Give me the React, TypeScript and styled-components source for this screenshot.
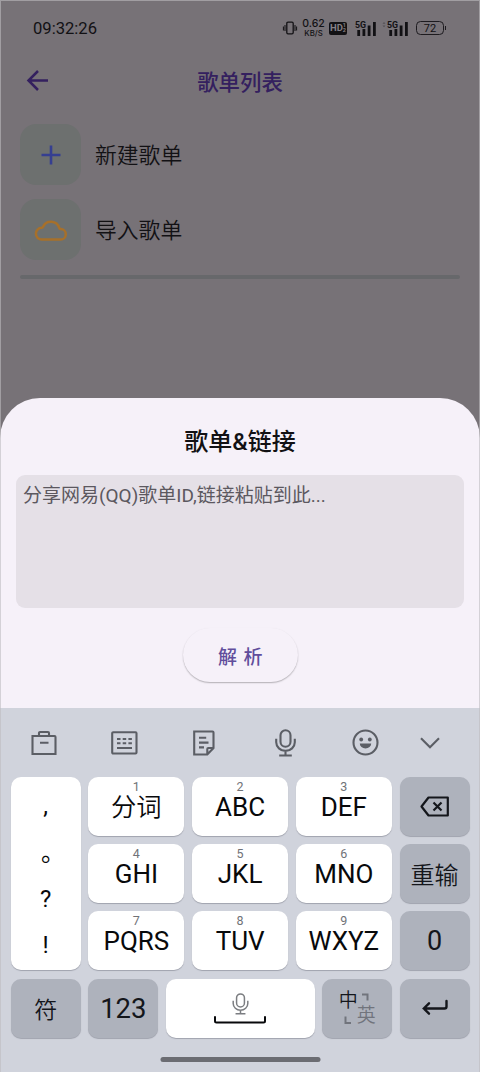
import React from "react";
import styled, { createGlobalStyle } from "styled-components";

const GlobalStyle = createGlobalStyle`
  *, *::before, *::after { box-sizing: border-box; }
  body { margin: 0; }
  button { border: 0; padding: 0; background: none; font: inherit; color: inherit; }
  svg { display: block; flex: none; overflow: visible; }
`;

const Screen = styled.div`
  position: relative;
  width: 480px;
  height: 1072px;
  display: flex;
  flex-direction: column;
  overflow: hidden;
  background: #777277;
  font-family: Roboto, "Noto Sans CJK SC", sans-serif;
  color: #121114;
  &::after {
    content: "";
    position: absolute;
    inset: 0;
    border: 1px solid rgba(190, 188, 192, 0.6);
    border-bottom-width: 0;
    pointer-events: none;
  }
`;

const StatusBar = styled.header`
  height: 54px;
  padding: 2px 34px 0 33px;
  display: flex;
  align-items: center;
  justify-content: space-between;
`;

const Clock = styled.time`
  font-size: 16.6px;
  line-height: 20px;
  padding-top: 1px;
`;

const StatusIcons = styled.div`
  display: flex;
  align-items: center;
`;

const NetSpeed = styled.div`
  width: 23px;
  margin-left: 5px;
  display: flex;
  flex-direction: column;
  align-items: center;
  font-family: Inter, sans-serif;
  font-weight: 500;
  font-size: 10.5px;
  line-height: 10px;
`;

const NetUnit = styled.span`
  font-size: 7.8px;
  line-height: 8px;
`;

const HdBadge = styled.div`
  width: 18px;
  height: 13px;
  margin: 0 9px 0 4px;
  border-radius: 2px;
  background: #121114;
  color: #858086;
  display: flex;
  align-items: center;
  justify-content: center;
  font-size: 9.5px;
  font-weight: 700;
  line-height: 12px;
`;

const HdDigits = styled.span`
  display: flex;
  flex-direction: column;
  font-size: 5.5px;
  line-height: 5px;
`;

const Signal = styled.div<{ $gap: number }>`
  width: 21px;
  height: 15px;
  margin-right: ${(p) => p.$gap}px;
`;

const Battery = styled.div`
  position: relative;
  width: 28px;
  height: 14px;
  margin-right: 2px;
  border: 1px solid #1d1b1f;
  border-radius: 4.5px;
  font-size: 11px;
  line-height: 13px;
  text-align: center;
  &::after {
    content: "";
    position: absolute;
    right: -3px;
    top: 4px;
    width: 1.5px;
    height: 4px;
    background: #1d1b1f;
  }
`;

const TitleBar = styled.div`
  height: 54px;
  padding: 0 25px;
  display: grid;
  grid-template-columns: 24px 1fr 24px;
  align-items: center;
  color: #34205f;
`;

const PageTitle = styled.h1`
  margin: 0;
  padding-top: 3px;
  font-size: 21.4px;
  line-height: 30px;
  font-weight: 500;
  text-align: center;
`;

const Actions = styled.div`
  height: 290px;
  padding: 16px 20px 0;
  display: flex;
  flex-direction: column;
`;

const ActionRow = styled.div`
  height: 61px;
  margin-bottom: 14px;
  display: flex;
  align-items: center;
  gap: 14px;
`;

const ActionLabel = styled.span`
  padding-top: 3px;
  font-size: 21.8px;
  line-height: 32px;
  font-weight: 350;
`;

const IconTile = styled.div`
  width: 61px;
  height: 61px;
  border-radius: 16px;
  background: #6d706f;
  display: flex;
  align-items: center;
  justify-content: center;
`;

const Divider = styled.div`
  height: 4px;
  margin-top: 0.5px;
  border-radius: 2px;
  background: #67686b;
`;

const Sheet = styled.section`
  height: 310px;
  padding: 27px 16px 0;
  border-radius: 40px 40px 0 0;
  background: #f6f1f9;
  display: flex;
  flex-direction: column;
  align-items: center;
`;

const SheetTitle = styled.h2`
  margin: 0 0 15.5px;
  font-size: 24px;
  line-height: 34px;
  font-weight: 500;
`;

const LinkInput = styled.div`
  align-self: stretch;
  height: 133px;
  padding: 7.5px 7px;
  border-radius: 9px;
  background: #e5e0e7;
  color: #5c585f;
  font-size: 19px;
  line-height: 28px;
`;

const ParseButton = styled.button`
  width: 115px;
  height: 54px;
  margin-top: 20.5px;
  padding-left: 7px;
  border-radius: 27px;
  background: #f6f1f9;
  box-shadow: 0 1px 1.5px rgba(0, 0, 0, 0.28);
  color: #614e9c;
  font-size: 19px;
  font-weight: 500;
  letter-spacing: 6.5px;
`;

const Keyboard = styled.section`
  height: 364px;
  padding: 0 10px 0 11px;
  background: #d0d3dc;
  display: flex;
  flex-direction: column;
`;

const Toolbar = styled.div`
  height: 69px;
  margin-left: 20px;
  display: grid;
  grid-template-columns: 79.5px 82.5px 81.5px 77px 68.5px 29px;
  align-items: center;
  color: #5b5e65;
`;

const KeyGrid = styled.div`
  display: grid;
  grid-template-columns: 70px 96px 96px 96px 70px;
  grid-template-rows: repeat(3, 59px);
  column-gap: 7.75px;
  row-gap: 8.2px;
  margin-left: -0.4px;
`;

const BottomRow = styled.div`
  margin-top: 8.2px;
  height: 59px;
  margin-left: -0.2px;
  display: grid;
  grid-template-columns: 70px 70px 149px 70px 70px;
  column-gap: 7.5px;
`;

const Key = styled.button<{ $dark?: boolean; $size?: number; $light?: boolean }>`
  border-radius: 10px;
  background: ${(p) => (p.$dark ? "#aeb2bc" : "#ffffff")};
  box-shadow: 0 1px 0.8px rgba(80, 84, 96, 0.36);
  color: ${(p) => (p.$dark ? "#14161b" : "#08090b")};
  font-size: ${(p) => p.$size ?? 26}px;
  font-weight: ${(p) => (p.$light ? 350 : 400)};
  display: flex;
  flex-direction: column;
  align-items: center;
  justify-content: center;
`;

const KeyHint = styled.span`
  height: 16px;
  color: #707277;
  font-size: 12.5px;
  line-height: 16px;
`;

const KeyLabel = styled.span<{ $cjk?: boolean }>`
  height: 39px;
  font-size: ${(p) => (p.$cjk ? 25.3 : 26)}px;
  font-weight: ${(p) => (p.$cjk ? 350 : 400)};
  line-height: ${(p) => (p.$cjk ? 26 : 24)}px;
`;

const SideKey = styled(Key)`
  grid-row: 1 / span 3;
  justify-content: flex-start;
  padding-top: 5.5px;
  font-size: 24px;
`;

const Mark = styled.span`
  height: 46.5px;
  display: flex;
  align-items: center;
  justify-content: center;
`;

const FullStop = styled(Mark)`
  padding: 0 0 4px 15px;
`;

const LanguageKey = styled(Key)`
  display: grid;
  grid-template-columns: 18px 18px;
  grid-template-rows: 15.5px 15.5px;
  align-content: center;
  justify-content: center;
  place-items: center;
  padding-top: 1px;
  font-size: 19px;
  font-weight: 350;
  line-height: 18px;
`;

const Muted = styled.span`
  color: #71747c;
`;

const Corner = styled.span<{ $end?: boolean }>`
  align-self: ${(p) => (p.$end ? "end" : "start")};
`;

const HomeBar = styled.div`
  width: 160px;
  height: 5px;
  margin: 19px auto 0;
  transform: translateX(-0.5px);
  border-radius: 3px;
  background: #6b6c72;
`;

const VibrateIcon = () => (
  <svg width="14" height="14" viewBox="0 0 14 14" fill="none" stroke="currentColor" strokeWidth="1.3">
    <rect x="3.8" y="1.2" width="6.4" height="11.6" rx="1.2" />
    <path d="M2 4v6M.4 5.5v4M12 4v6M13.6 5.5v4" strokeWidth="1" />
  </svg>
);

const SignalBars = ({ gap, active }: { gap: number; active?: boolean }) => (
  <Signal $gap={gap}>
    <svg width="21" height="15" viewBox="0 0 21 15" fill="currentColor">
      {active && <path d="M-5.5 2.8l1.500-1.800 1.500 1.800zM-5.500 4.500h3l-1.500 1.800z" opacity="0.35" />}
      <text x="-1" y="6.5" fontSize="8.8" fontWeight="700">5G</text>
      <path d="M1.3 9h2.8v6H1.3zM6.5 8h2.8v7H6.5zM11.7 4.5h2.8V15h-2.8zM17 1h2.8v14H17z" />
    </svg>
  </Signal>
);

const BackIcon = () => (
  <svg width="24" height="24" viewBox="0 0 24 24" fill="none" stroke="currentColor" strokeWidth="2.5">
    <path d="M23 11.500H3.500M13 2 3.500 11.500l9.500 9.500" />
  </svg>
);

const PlusIcon = () => (
  <svg width="20" height="20" viewBox="0 0 20 20" fill="none" stroke="#363f91" strokeWidth="2.6">
    <path d="M10 .5v19M.5 10h19" />
  </svg>
);

const CloudIcon = () => (
  <svg width="32" height="22" viewBox="0 0 32 22" fill="none" stroke="#a7702a" strokeWidth="2.5" strokeLinejoin="round">
    <path d="M6.8 20.500h18.700a5.200 5.200 0 0 0 .2-10.400c-.8 0-1.100-.1-1.400-1A8.700 8.700 0 0 0 8 7.900c-.2.700-.5.900-1.300.9a5.850 5.850 0 0 0 .1 11.700Z" />
  </svg>
);

const BriefcaseIcon = () => (
  <svg width="26" height="26" viewBox="0 0 26 26" fill="none" stroke="currentColor" strokeWidth="2.1">
    <path d="M1.500 6h22a1 1 0 0 1 1 1v17h-23zM8 6V3a1 1 0 0 1 1-1h8a1 1 0 0 1 1 1v3M9 12.700h8.500" />
  </svg>
);

const KeyboardIcon = () => (
  <svg width="27" height="24" viewBox="0 0 27 24" fill="none" stroke="currentColor" strokeWidth="2.1">
    <rect x="1.2" y="1.2" width="24.3" height="21.3" rx="1" />
    <path d="M6 8h3.500M11.700 8h3.500M17.400 8h3.500M6 12.300h3.500M11.700 12.300h3.500M17.400 12.300h3.500M6 17h15" />
  </svg>
);

const NoteIcon = () => (
  <svg width="22" height="26" viewBox="0 0 22 26" fill="none" stroke="currentColor" strokeWidth="2.1">
    <path d="M1.200 1.500h18.300a1 1 0 0 1 1 1v15.500l-6.200 6.500H1.200zM14.300 24v-5a1 1 0 0 1 1-1h5M6 7.800h7.200M6 12.600h9.500M6 17.400h5" />
  </svg>
);

const MicIcon = ({ width, height, stroke = 2.1 }: { width: number; height: number; stroke?: number }) => (
  <svg width={width} height={height} viewBox="0 0 21 28" fill="none" stroke="currentColor" strokeWidth={stroke}>
    <rect x="5.5" y="1.2" width="10" height="16.5" rx="5" />
    <path d="M1.200 9.800v3.500a9.300 8.600 0 0 0 18.600 0V9.800M10.500 22v4.500M4.200 26.500h12.600" />
  </svg>
);

const SmileIcon = () => (
  <svg width="27" height="27" viewBox="0 0 27 27" fill="none" stroke="currentColor" strokeWidth="2.1">
    <circle cx="13.5" cy="13.5" r="12" />
    <g fill="currentColor" stroke="none">
      <circle cx="9.2" cy="10.5" r="1.9" />
      <circle cx="17.8" cy="10.5" r="1.9" />
      <path d="M7.800 14.500h11.400a5.700 5 0 0 1-11.400 0Z" />
    </g>
  </svg>
);

const ChevronIcon = () => (
  <svg width="20" height="12" viewBox="0 0 20 12" fill="none" stroke="currentColor" strokeWidth="2.1">
    <path d="m1 1.200 9 9 9-9" />
  </svg>
);

const BackspaceIcon = () => (
  <svg width="30" height="20" viewBox="0 0 30 20" fill="none" stroke="currentColor" strokeWidth="2.2" strokeLinejoin="round">
    <path d="M8.500 .5h19.300v18H8.500L1.500 9.500zM13.500 5.500l8 8M21.500 5.500l-8 8" />
  </svg>
);

const SpaceIcon = () => (
  <svg width="52" height="8" viewBox="0 0 52 8" fill="none" stroke="currentColor" strokeWidth="2" strokeLinecap="round">
    <path d="M1 2v4a1.500 1.500 0 0 0 1.500 1.500h47A1.500 1.500 0 0 0 51 6V2" />
  </svg>
);

const EnterIcon = () => (
  <svg width="26" height="16" viewBox="0 0 26 16" fill="none" stroke="currentColor" strokeWidth="2.4" strokeLinecap="round">
    <path d="M24.500 1v5.500a2 2 0 0 1-2 2H2M7 3.300 1.800 8.500 7 13.700" />
  </svg>
);

const CornerIcon = ({ flipped }: { flipped?: boolean }) => (
  <svg width="8" height="8" viewBox="0 0 8 8" fill="none" stroke="#71747c" strokeWidth="2">
    <path d={flipped ? "M1.500 .5v6.500H7" : "M0 1.500h5.500V7.500"} />
  </svg>
);

const letterKeys = ["分词", "ABC", "DEF", "GHI", "JKL", "MNO", "PQRS", "TUV", "WXYZ"];

const LetterKey = ({ index }: { index: number }) => (
  <Key>
    <KeyHint>{index + 1}</KeyHint>
    <KeyLabel $cjk={index === 0}>{letterKeys[index]}</KeyLabel>
  </Key>
);

const SpaceMic = styled.span`
  color: #7b7d81;
`;

export default function App() {
  return (
    <Screen>
      <GlobalStyle />
      <StatusBar>
        <Clock>09:32:26</Clock>
        <StatusIcons>
          <VibrateIcon />
          <NetSpeed>
            <span>0.62</span>
            <NetUnit>KB/S</NetUnit>
          </NetSpeed>
          <HdBadge>
            HD
            <HdDigits>
              <span>1</span>
              <span>2</span>
            </HdDigits>
          </HdBadge>
          <SignalBars gap={11} />
          <SignalBars gap={7} active />
          <Battery>72</Battery>
        </StatusIcons>
      </StatusBar>
      <TitleBar>
        <BackIcon />
        <PageTitle>歌单列表</PageTitle>
      </TitleBar>
      <Actions>
        <ActionRow>
          <IconTile><PlusIcon /></IconTile>
          <ActionLabel>新建歌单</ActionLabel>
        </ActionRow>
        <ActionRow>
          <IconTile><CloudIcon /></IconTile>
          <ActionLabel>导入歌单</ActionLabel>
        </ActionRow>
        <Divider />
      </Actions>
      <Sheet>
        <SheetTitle>歌单&amp;链接</SheetTitle>
        <LinkInput>分享网易(QQ)歌单ID,链接粘贴到此...</LinkInput>
        <ParseButton>解析</ParseButton>
      </Sheet>
      <Keyboard>
        <Toolbar>
          <BriefcaseIcon />
          <KeyboardIcon />
          <NoteIcon />
          <MicIcon width={21} height={28} />
          <SmileIcon />
          <ChevronIcon />
        </Toolbar>
        <KeyGrid>
          <SideKey as="div">
            <Mark>,</Mark>
            <FullStop>。</FullStop>
            <Mark>?</Mark>
            <Mark>!</Mark>
          </SideKey>
          <LetterKey index={0} />
          <LetterKey index={1} />
          <LetterKey index={2} />
          <Key $dark><BackspaceIcon /></Key>
          <LetterKey index={3} />
          <LetterKey index={4} />
          <LetterKey index={5} />
          <Key $dark $light $size={24}>重输</Key>
          <LetterKey index={6} />
          <LetterKey index={7} />
          <LetterKey index={8} />
          <Key $dark $size={27}>0</Key>
        </KeyGrid>
        <BottomRow>
          <Key $dark $light $size={23}>符</Key>
          <Key $dark $size={27.5}>123</Key>
          <Key>
            <SpaceMic><MicIcon width={17} height={22} stroke={1.9} /></SpaceMic>
            <SpaceIcon />
          </Key>
          <LanguageKey $dark>
            <span>中</span>
            <Corner><CornerIcon /></Corner>
            <Corner $end><CornerIcon flipped /></Corner>
            <Muted>英</Muted>
          </LanguageKey>
          <Key $dark><EnterIcon /></Key>
        </BottomRow>
        <HomeBar />
      </Keyboard>
    </Screen>
  );
}
